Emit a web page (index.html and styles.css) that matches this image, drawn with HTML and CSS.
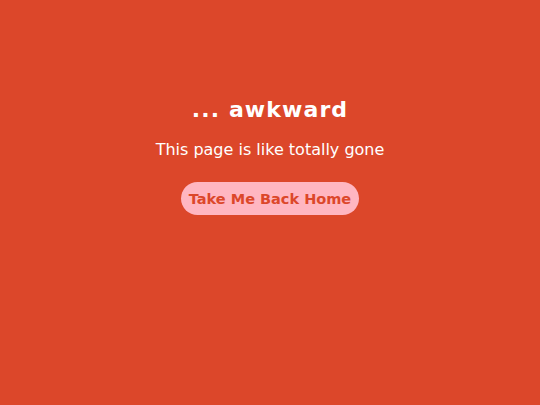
FILE: index.html
```html
<!DOCTYPE html>
<html lang="en">
<head>
<meta charset="utf-8">
<title>Page not found</title>
<link rel="stylesheet" href="styles.css">
</head>
<body>
<main class="notfound">
  <h1 class="title">... awkward</h1>
  <p class="subtitle">This page is like totally gone</p>
  <a class="home-btn" href="#">Take Me Back Home</a>
</main>
</body>
</html>
```

FILE: styles.css
```css
html, body {
  margin: 0;
  padding: 0;
  height: 100%;
}
body {
  background: #dc472a;
  font-family: "DejaVu Sans", "Liberation Sans", sans-serif;
  color: #ffffff;
}
.notfound {
  display: flex;
  flex-direction: column;
  align-items: center;
  padding-top: 97px;
}
.title {
  margin: 0;
  font-size: 22px;
  line-height: 26px;
  font-weight: 700;
  letter-spacing: 1.1px;
}
.subtitle {
  margin: 17px 0 0;
  font-size: 16px;
  line-height: 19px;
  font-weight: 400;
}
.home-btn {
  margin-top: 23px;
  display: flex;
  align-items: center;
  justify-content: center;
  height: 33px;
  padding: 0 8px;
  border-radius: 17px;
  background: #ffb6c1;
  color: #dc472a;
  font-size: 14.5px;
  letter-spacing: 0px;
  font-weight: 700;
  text-decoration: none;
}
```
